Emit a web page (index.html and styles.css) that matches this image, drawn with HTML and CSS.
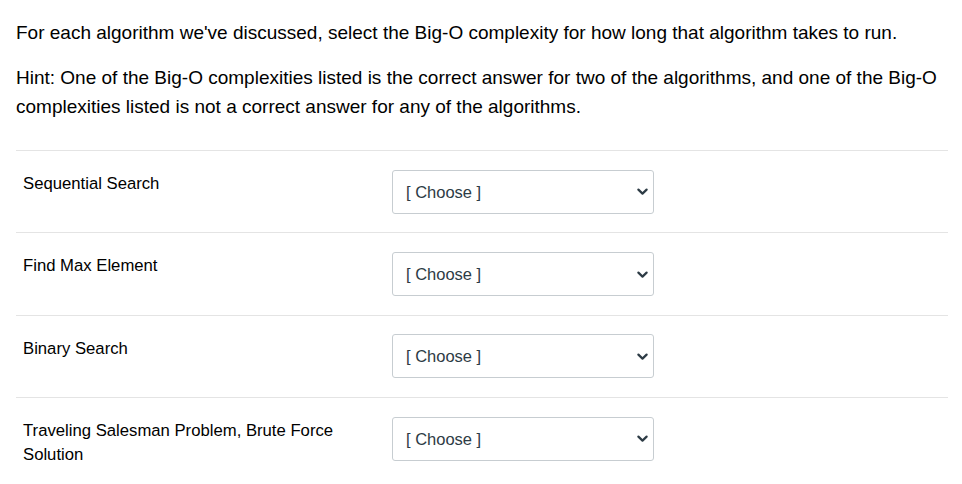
FILE: index.html
```html
<!DOCTYPE html>
<html lang="en">
<head>
<meta charset="utf-8">
<title>Quiz question</title>
<link rel="stylesheet" href="styles.css">
</head>
<body>
<div class="question">
  <div class="question-text">
    <p>For each algorithm we've discussed, select the Big-O complexity for how long that algorithm takes to run.</p>
    <p>Hint: One of the Big-O complexities listed is the correct answer for two of the algorithms, and one of the Big-O complexities listed is not a correct answer for any of the algorithms.</p>
  </div>
  <div class="answers">
    <div class="answer-row">
      <div class="answer-label">Sequential Search</div>
      <div class="answer-select"><div class="select"><span>[ Choose ]</span><svg class="chev" width="11" height="8" viewBox="0 0 11 8"><path d="M1.4 1.6 L5.5 5.6 L9.6 1.6" fill="none" stroke="#2d3b45" stroke-width="2.2" stroke-linecap="round" stroke-linejoin="round"/></svg></div></div>
    </div>
    <div class="answer-row">
      <div class="answer-label">Find Max Element</div>
      <div class="answer-select"><div class="select"><span>[ Choose ]</span><svg class="chev" width="11" height="8" viewBox="0 0 11 8"><path d="M1.4 1.6 L5.5 5.6 L9.6 1.6" fill="none" stroke="#2d3b45" stroke-width="2.2" stroke-linecap="round" stroke-linejoin="round"/></svg></div></div>
    </div>
    <div class="answer-row">
      <div class="answer-label">Binary Search</div>
      <div class="answer-select"><div class="select"><span>[ Choose ]</span><svg class="chev" width="11" height="8" viewBox="0 0 11 8"><path d="M1.4 1.6 L5.5 5.6 L9.6 1.6" fill="none" stroke="#2d3b45" stroke-width="2.2" stroke-linecap="round" stroke-linejoin="round"/></svg></div></div>
    </div>
    <div class="answer-row">
      <div class="answer-label">Traveling Salesman Problem, Brute Force Solution</div>
      <div class="answer-select"><div class="select"><span>[ Choose ]</span><svg class="chev" width="11" height="8" viewBox="0 0 11 8"><path d="M1.4 1.6 L5.5 5.6 L9.6 1.6" fill="none" stroke="#2d3b45" stroke-width="2.2" stroke-linecap="round" stroke-linejoin="round"/></svg></div></div>
    </div>
  </div>
</div>
</body>
</html>
```
FILE: styles.css
```css
html, body {
  margin: 0;
  padding: 0;
  background: #fff;
}
body {
  font-family: "Liberation Sans", Arial, sans-serif;
  color: #000;
}
.question {
  padding: 18px 14px 0 16px;
}
.question-text p {
  margin: 0 0 16px 0;
  font-size: 19px;
  line-height: 29px;
}
.question-text p:last-child {
  margin-bottom: 29px;
}
.answers {
  width: 932px;
}
.answer-row {
  display: flex;
  border-top: 1px solid #e4e4e4;
  height: 81.4px;
}
.answer-label {
  width: 330px;
  padding: 21px 0 0 7px;
  font-size: 16.7px;
  line-height: 24px;
}
.answer-select {
  display: flex;
  align-items: center;
  padding-left: 39px;
}
.select {
  border: 1px solid #c7cdd1;
  border-radius: 3px;
  display: flex;
  align-items: center;
  justify-content: space-between;
  padding: 1px 5px 0 13px;
  box-sizing: border-box;
  width: 262px;
  height: 44px;
  font-family: "Liberation Sans", Arial, sans-serif;
  font-size: 16.5px;
  color: #2d3b45;
}
.chev {
  display: block;
}
```
